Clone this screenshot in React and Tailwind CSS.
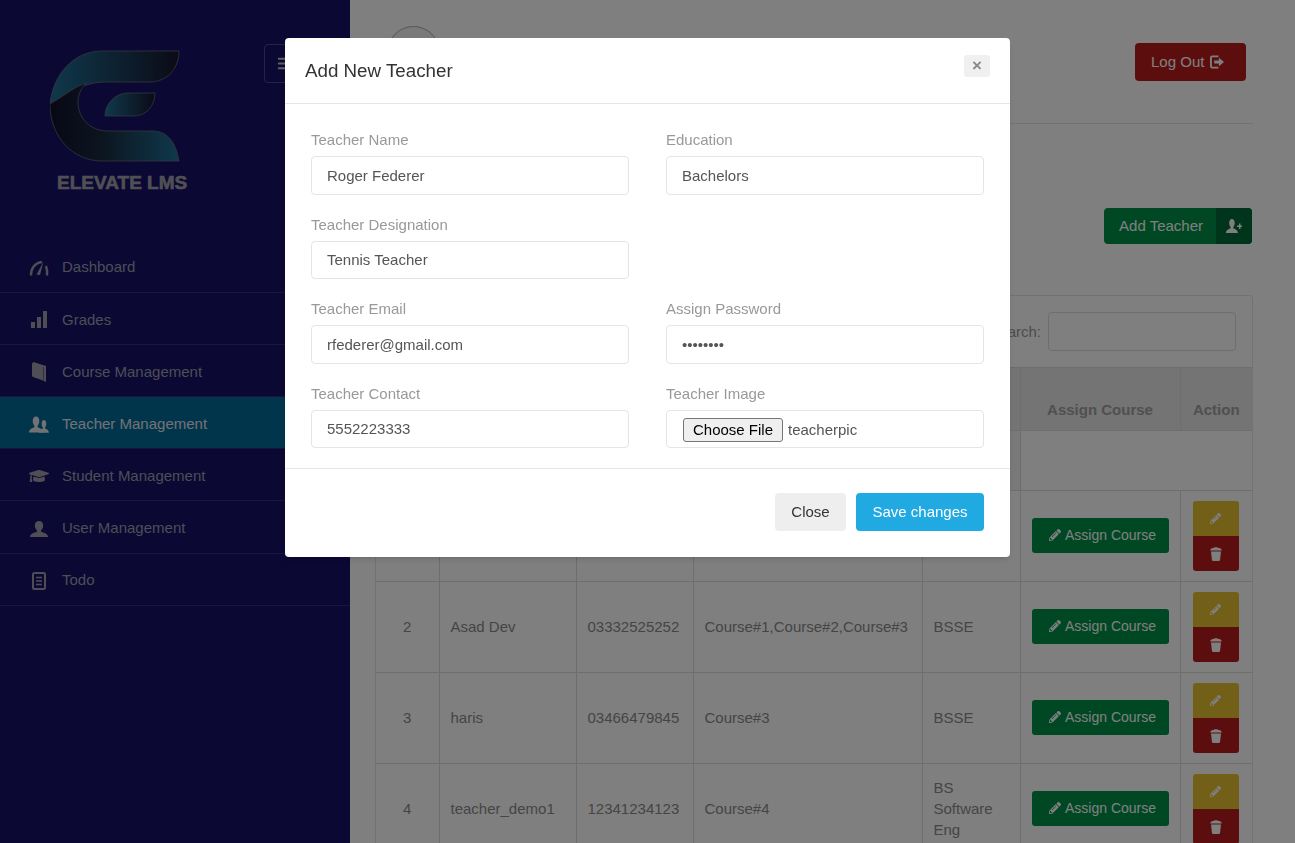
import { FaBars, FaGraduationCap, FaPencilAlt } from "react-icons/fa";

const USER_PATH =
  "M9 0c2.6 0 4.2 2 4.2 4.6 0 2-.9 3.7-2.1 4.6v1.5c2 .8 6.9 1.7 6.9 5.3H0c0-3.600 4.900-4.500 6.900-5.300V9.200C5.700 8.300 4.800 6.600 4.800 4.600 4.800 2 6.400 0 9 0z";

function GaugeIcon() {
  return (
    <svg width="20" height="16" viewBox="0 0 20 16" fill="none" stroke="currentColor">
      <path d="M2 15.500C1.500 9 6 2.500 13 2" strokeWidth="2.400" />
      <path d="M17 6c1 3 1.500 6 1 9.500" strokeWidth="2.400" />
      <path d="M7.500 14.500L14.500 1.500L11 15z" fill="currentColor" stroke="none" />
    </svg>
  );
}

function BarsIcon() {
  return (
    <svg width="16" height="17" viewBox="0 0 16 17" fill="currentColor">
      <rect x="0" y="11" width="4" height="6" />
      <rect x="6" y="6" width="4" height="11" />
      <rect x="12" y="0" width="4" height="17" />
    </svg>
  );
}

function BookIcon() {
  return (
    <svg width="15" height="20" viewBox="0 0 15 20" fill="currentColor">
      <path d="M0 1.500L1.500 0L14 4v16L11 18.500 1 15C.3 14.700 0 14 0 13.500z" />
      <path d="M11.500 5v13" stroke="#0d0a3b" strokeWidth="0.8" fill="none" opacity="0.5" />
    </svg>
  );
}

function UserIcon({ size = 18 }) {
  return (
    <svg width={size} height={(size * 16) / 18} viewBox="0 0 18 16" fill="currentColor">
      <path d={USER_PATH} />
    </svg>
  );
}

function UsersIcon() {
  return (
    <svg width="20" height="17" viewBox="0 0 20 17" fill="currentColor">
      <path d={USER_PATH} transform="translate(0 .5) scale(.78 1)" />
      <path d={USER_PATH} transform="translate(10 4) scale(.55 .8)" />
    </svg>
  );
}

function TodoIcon() {
  return (
    <svg width="14" height="18" viewBox="0 0 14 18" fill="none" stroke="currentColor">
      <rect x="1" y="1" width="12" height="16" rx="1.500" strokeWidth="2" />
      <path d="M4 5.500h6M4 9h6M4 12.500h6" strokeWidth="1.600" />
    </svg>
  );
}

function LogoutIcon() {
  return (
    <svg width="14" height="14" viewBox="0 0 15 14" fill="currentColor">
      <path d="M9 1H2.500C1.500 1 1 1.500 1 2.500v9c0 1 .5 1.500 1.500 1.500H9" fill="none" stroke="currentColor" strokeWidth="2" />
      <path d="M4.500 5.500h5V2.500L15 7l-5.500 4.500V8.500h-5z" />
    </svg>
  );
}

function AddUserIcon() {
  return (
    <svg width="16" height="14" viewBox="0 0 16 14" fill="currentColor">
      <path d={USER_PATH} transform="scale(.66 .875)" />
      <path d="M11 6.500h2v-2h1.500v2H16V8h-1.500v2H13V8h-2z" />
    </svg>
  );
}

function TrashIcon() {
  return (
    <svg width="12" height="14" viewBox="0 0 12 14" fill="currentColor">
      <path d="M0 3.500C.5 1.500 3 .8 4 .8 4.300 0 7.700 0 8 .8c1 0 3.500.7 4 2.700z" />
      <path d="M1 4.500h10l-.9 8c-.1 1-.8 1.500-1.600 1.500h-5c-.8 0-1.500-.5-1.600-1.500z" />
    </svg>
  );
}

function Logo() {
  return (
    <svg width="132" height="114" viewBox="0 0 132 114">
      <defs>
        <linearGradient id="logoTop" x1="0" y1="0" x2="1" y2="0">
          <stop offset="0" stopColor="#1f7198" />
          <stop offset="1" stopColor="#16162c" />
        </linearGradient>
        <linearGradient id="logoBottom" x1="0" y1="0" x2="1" y2="0">
          <stop offset="0" stopColor="#10102a" />
          <stop offset="0.4" stopColor="#182a40" />
          <stop offset="1" stopColor="#1f7198" />
        </linearGradient>
        <linearGradient id="logoLeaf" x1="0" y1="0" x2="1" y2="0">
          <stop offset="0" stopColor="#1f7198" />
          <stop offset="1" stopColor="#16162c" />
        </linearGradient>
      </defs>
      <path
        d="M0 54C3 24 24 1 52 1H129C129 18 118 32 99 32H55C35 32 20 42 0 54z"
        fill="url(#logoTop)"
        stroke="#6c6c78"
        strokeWidth="0.8"
      />
      <path
        d="M0 54C17 44 25 36 37 33C30 38 28 47 28 52C28 68 40 81 58 81H103C117 81 126 92 129 111H52C22 111 0 86 0 54z"
        fill="url(#logoBottom)"
        stroke="#6c6c78"
        strokeWidth="0.8"
      />
      <path
        d="M55 66C55 53 66 43 78 43H105C105 56 96 66 84 66z"
        fill="url(#logoLeaf)"
        stroke="#6c6c78"
        strokeWidth="0.8"
      />
    </svg>
  );
}

const NAV = [
  { label: "Dashboard", icon: <GaugeIcon /> },
  { label: "Grades", icon: <BarsIcon /> },
  { label: "Course Management", icon: <BookIcon /> },
  { label: "Teacher Management", icon: <UsersIcon />, active: true },
  { label: "Student Management", icon: <FaGraduationCap size={20} /> },
  { label: "User Management", icon: <UserIcon /> },
  { label: "Todo", icon: <TodoIcon /> },
];

const ROWS = [
  { no: "1", name: "", contact: "", course: "", edu: "" },
  { no: "2", name: "Asad Dev", contact: "03332525252", course: "Course#1,Course#2,Course#3", edu: "BSSE" },
  { no: "3", name: "haris", contact: "03466479845", course: "Course#3", edu: "BSSE" },
  { no: "4", name: "teacher_demo1", contact: "12341234123", course: "Course#4", edu: "BS Software Eng" },
];

function Sidebar() {
  return (
    <aside className="w-[350px] shrink-0 bg-[#171068]">
      <div className="h-[240.5px] flex pl-[50px] pt-[44px]">
        <div className="w-[140px] pt-[6px]">
          <Logo />
          <div className="mt-[7px] pl-[7px] text-[19px] leading-[24px] font-bold text-[#a0a0a8] whitespace-nowrap [-webkit-text-stroke:0.6px_#a0a0a8]">
            ELEVATE LMS
          </div>
        </div>
        <button className="ml-[74px] w-[40px] h-[39px] border border-[#4a4690] rounded flex items-center justify-center text-[#c0c0c0]">
          <FaBars size={15} />
        </button>
      </div>
      <nav>
        {NAV.map((item) => (
          <div
            key={item.label}
            className={
              item.active
                ? "h-[52.2px] pt-[3px] flex items-center border-b border-[#2e2a70] bg-[#006a99] text-[#e4e4ea]"
                : "h-[52.2px] pt-[3px] flex items-center border-b border-[#302c80] text-[#9c9ca8]"
            }
          >
            <span className="w-[62px] pl-[29px] pr-[13px] flex justify-center shrink-0">{item.icon}</span>
            <span className="text-[15px]">{item.label}</span>
          </div>
        ))}
      </nav>
    </aside>
  );
}

function TableSection() {
  return (
    <div className="mt-[51px] border border-[#e4e4e4] border-b-0 rounded-t">
      <div className="h-[71px] flex items-start justify-end pt-[16px] pr-[16px] gap-[7px] text-[#999] text-[15px]">
        <span className="mt-[9px]">Search:</span>
        <input className="w-[188px] h-[39px] border border-[#ddd] rounded bg-white" />
      </div>
      <table className="w-full table-fixed border-collapse text-[15px] text-[#8a8a8a]">
        <colgroup>
          <col className="w-[63px]" />
          <col className="w-[137px]" />
          <col className="w-[117px]" />
          <col className="w-[229px]" />
          <col className="w-[98px]" />
          <col className="w-[160px]" />
          <col className="w-[72px]" />
        </colgroup>
        <thead>
          <tr className="h-[63px] bg-[#e8e8e8] text-[#a0a0a0]">
            <th className="border border-[#dcdcdc] border-l-0" colSpan={5}></th>
            <th className="border border-[#dcdcdc] align-bottom pb-[9px] font-bold">Assign Course</th>
            <th className="border border-[#dcdcdc] border-r-0 align-bottom pb-[9px] font-bold">Action</th>
          </tr>
        </thead>
        <tbody>
          <tr className="h-[60px]">
            <td className="border border-[#dcdcdc] border-l-0 bg-[#f2f2f2]" colSpan={5}></td>
            <td colSpan={2}></td>
          </tr>
          {ROWS.map((row) => (
            <tr key={row.no} className="h-[91px]">
              <td className="border border-[#dcdcdc] border-l-0 text-center">{row.no}</td>
              <td className="border border-[#dcdcdc] pl-[11px] pr-[9px]">{row.name}</td>
              <td className="border border-[#dcdcdc] pl-[11px] pr-[9px]">{row.contact}</td>
              <td className="border border-[#dcdcdc] pl-[11px] pr-[9px]">{row.course}</td>
              <td className="border border-[#dcdcdc] pl-[11px] pr-[9px] pb-[2px] leading-[21px]">{row.edu}</td>
              <td className="border border-[#dcdcdc] px-[11px]">
                <button className="mb-[2px] w-[137px] h-[35px] bg-[#008f47] rounded-[3px] text-white text-[14px] flex items-center justify-center gap-[4px] pl-[5px]">
                  <FaPencilAlt size={12} />
                  Assign Course
                </button>
              </td>
              <td className="border border-[#dcdcdc] border-r-0 px-[12px]">
                <div className="flex flex-col w-[46px]">
                  <button className="h-[35px] bg-[#e6c030] rounded-t-[3px] text-white flex items-center justify-center">
                    <FaPencilAlt size={11} />
                  </button>
                  <button className="h-[35px] bg-[#b81c1c] rounded-b-[3px] text-white flex items-center justify-center">
                    <TrashIcon />
                  </button>
                </div>
              </td>
            </tr>
          ))}
        </tbody>
      </table>
    </div>
  );
}

function Field({ label, value, type = "text" }) {
  return (
    <div>
      <label className="block h-[22px] leading-[22px] mb-[5px] text-[15px] text-[#999]">{label}</label>
      <input
        type={type}
        defaultValue={value}
        className="w-full h-[38.5px] px-[15px] border border-[#e5e5e5] rounded text-[15px] text-[#555] outline-none"
      />
    </div>
  );
}

function AddTeacherModal() {
  return (
    <div className="fixed inset-0 flex justify-center items-start pt-[38px]">
      <div className="w-[725px] bg-white rounded shadow-md">
        <div className="h-[66px] px-[20px] flex items-center justify-between border-b border-[#e5e5e5]">
          <h4 className="pt-[2px] text-[18.75px] text-[#333]">Add New Teacher</h4>
          <button className="mb-[10px] w-[26px] h-[22px] bg-[#f0f0f0] rounded-[3px] text-[#888] text-[17px] leading-[22px] font-bold">
            ×
          </button>
        </div>
        <div className="px-[26px] pt-[25px] pb-[19.5px] grid grid-cols-2 gap-x-[37px] gap-y-[19px]">
          <Field label="Teacher Name" value="Roger Federer" />
          <Field label="Education" value="Bachelors" />
          <Field label="Teacher Designation" value="Tennis Teacher" />
          <div></div>
          <Field label="Teacher Email" value="rfederer@gmail.com" />
          <Field label="Assign Password" value="password" type="password" />
          <Field label="Teacher Contact" value="5552223333" />
          <div>
            <label className="block h-[22px] leading-[22px] mb-[5px] text-[15px] text-[#999]">Teacher Image</label>
            <div className="h-[38.5px] pl-[16px] pt-[3px] border border-[#e5e5e5] rounded flex items-center text-[15px] text-[#555]">
              <button className="w-[100px] h-[24px] border border-[#767676] rounded-[3px] bg-[#efefef] text-black mr-[5px]">
                Choose File
              </button>
              teacherpic
            </div>
          </div>
        </div>
        <div className="border-t border-[#e5e5e5] pt-[24px] pb-[26px] px-[26px] flex justify-end gap-[10px] text-[15px]">
          <button className="w-[71px] h-[38px] pt-[2px] bg-[#eee] rounded text-[#333]">Close</button>
          <button className="w-[128px] h-[38px] pt-[2px] bg-[#21a9e1] rounded text-white">Save changes</button>
        </div>
      </div>
    </div>
  );
}

export default function App() {
  return (
    <div className="h-screen overflow-hidden flex bg-white font-['Liberation_Sans',Arial,sans-serif]">
      <Sidebar />
      <main className="flex-1 pl-[25px] pr-[44px]">
        <header className="h-[124px] pt-[26px] flex items-start justify-between border-b border-[#e4e4e4]">
          <div className="ml-[12px] w-[53px] h-[53px] rounded-full border border-[#aaa] bg-[#f4f4f4]"></div>
          <button className="mt-[17px] mr-[7px] w-[111px] h-[38px] pl-[16px] bg-[#b81c1c] rounded text-white text-[15px] flex items-center gap-[6px]">
            Log Out
            <LogoutIcon />
          </button>
        </header>
        <div className="mt-[84px] flex justify-end pr-[1px]">
          <button className="h-[36px] flex rounded overflow-hidden bg-[#008f47] text-white text-[15px]">
            <span className="w-[112px] h-full flex items-center justify-center pl-[2px]">Add Teacher</span>
            <span className="w-[36px] h-full flex items-center justify-center bg-[#006a38]">
              <AddUserIcon />
            </span>
          </button>
        </div>
        <TableSection />
      </main>
      <div className="fixed inset-0 bg-[rgba(0,0,0,0.5)]"></div>
      <AddTeacherModal />
    </div>
  );
}
